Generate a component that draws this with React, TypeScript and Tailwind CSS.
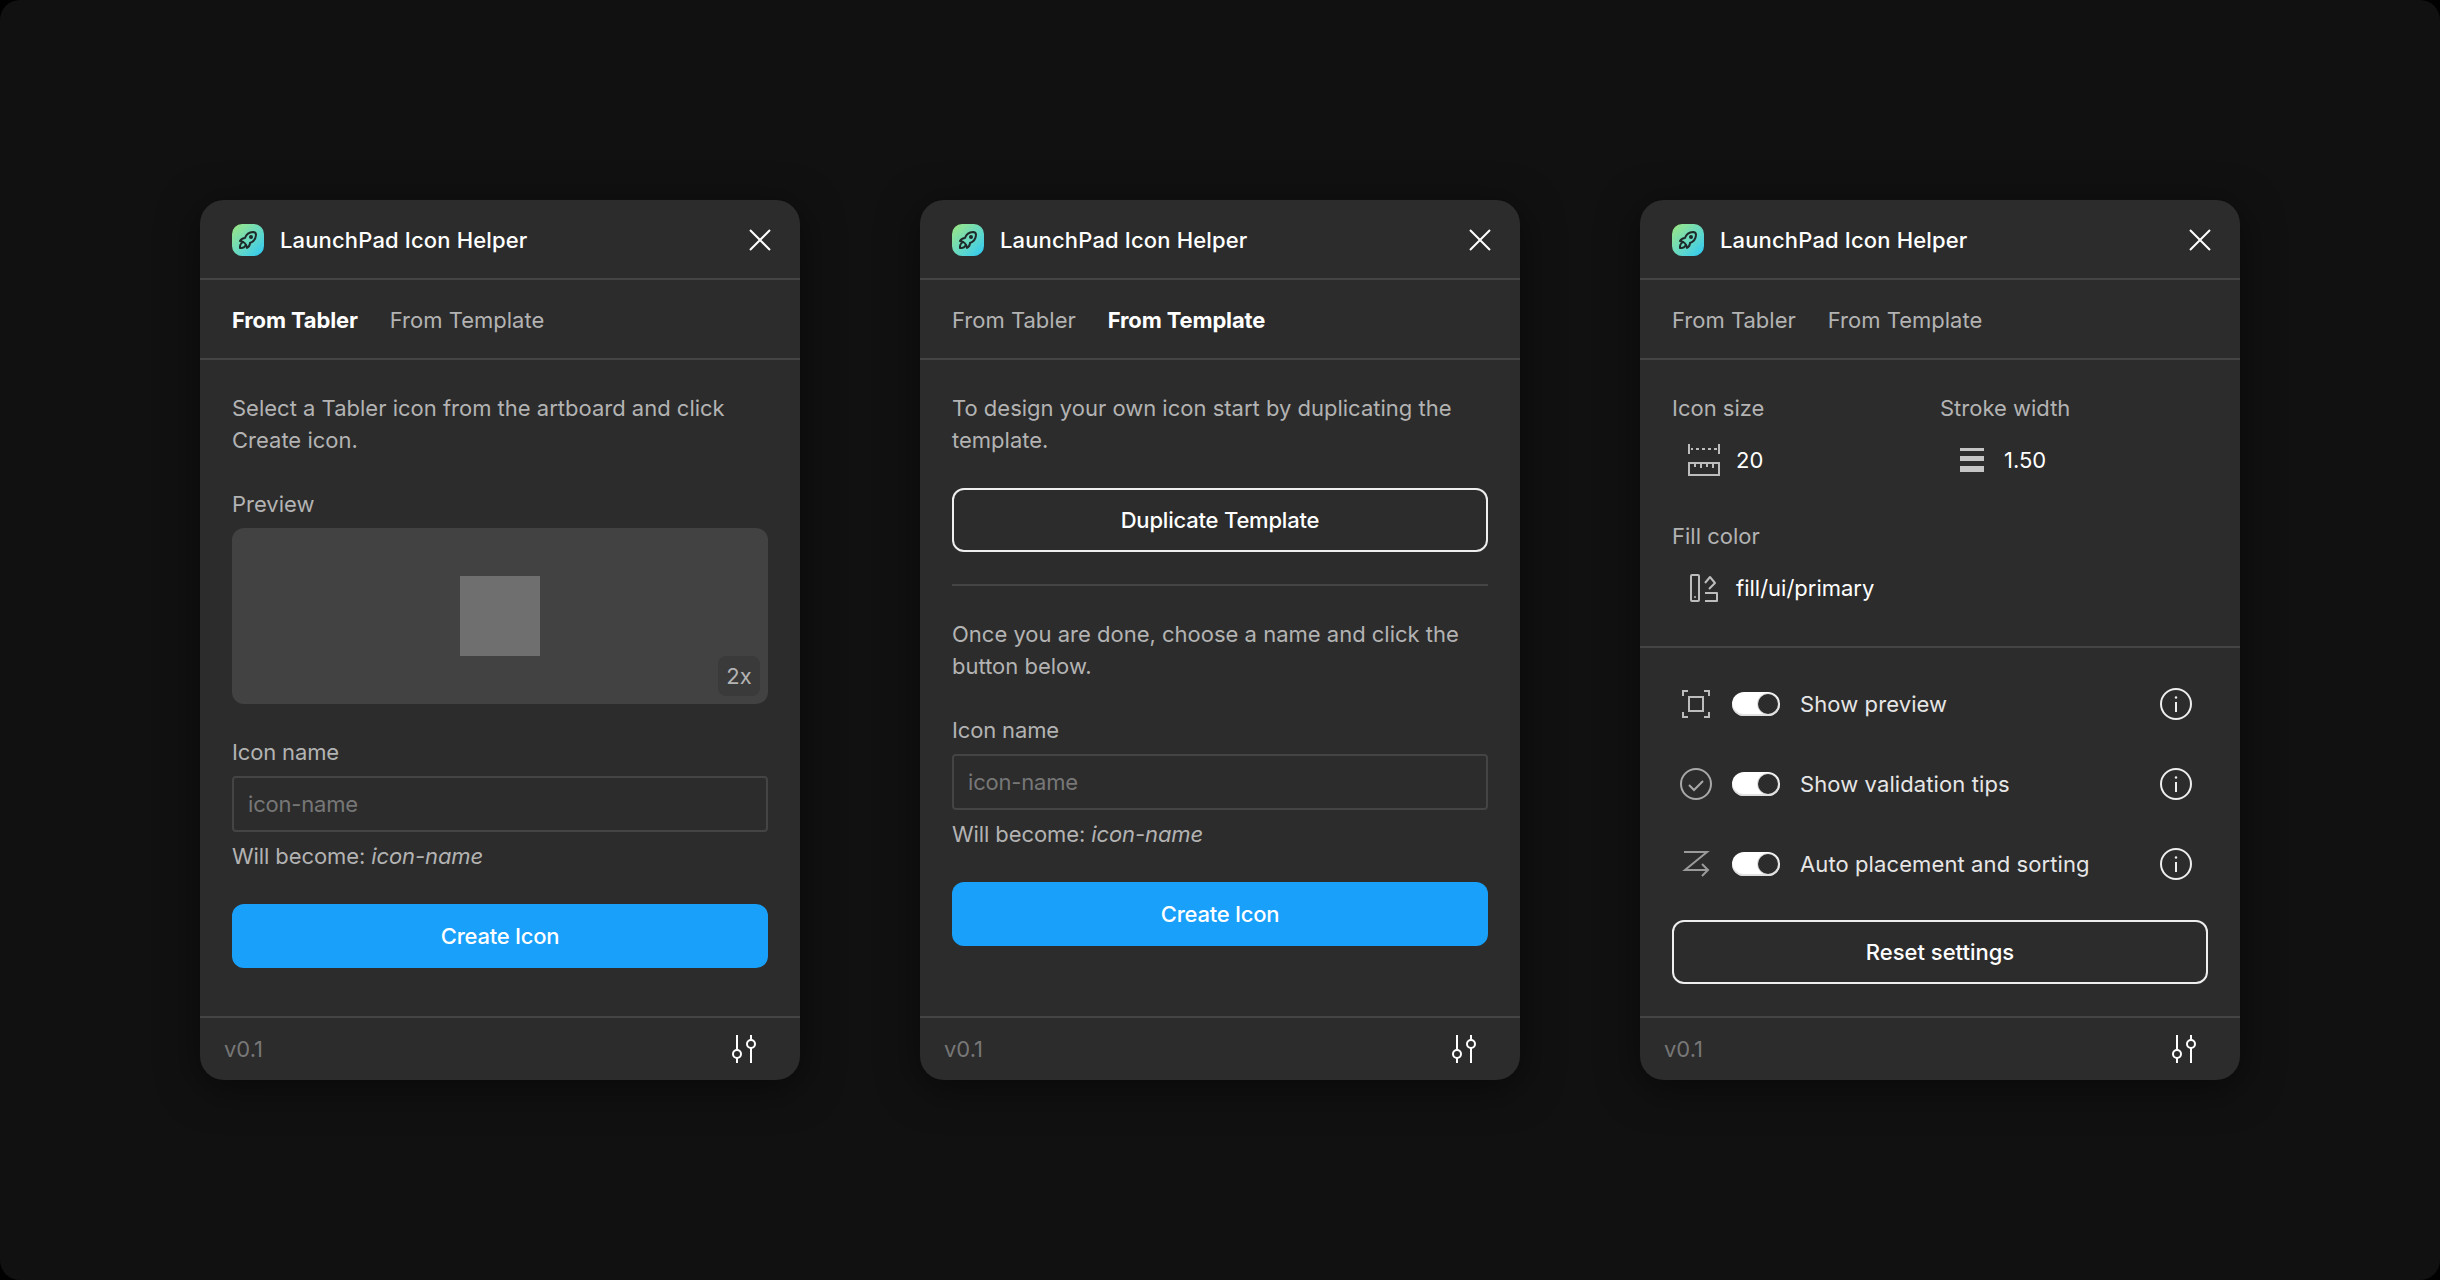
const font = "font-['Inter',sans-serif]";

function Logo() {
  return (
    <div className="flex h-8 w-8 items-center justify-center rounded-[10px] bg-gradient-to-br from-[#9be77a] to-[#22c8f5]">
      <svg viewBox="0 0 24 24" className="h-6 w-6" fill="none" stroke="#1f2a2a" strokeWidth="2" strokeLinecap="round" strokeLinejoin="round">
        <path d="M4 13a8 8 0 0 1 7 7a6 6 0 0 0 3 -5a9 9 0 0 0 6 -8a3 3 0 0 0 -3 -3a9 9 0 0 0 -8 6a6 6 0 0 0 -5 3" />
        <path d="M7 14a6 6 0 0 0 -3 6a6 6 0 0 0 6 -3" />
        <circle cx="15" cy="9" r="1" />
      </svg>
    </div>
  );
}

function CloseIcon() {
  return (
    <svg width="22" height="22" viewBox="0 0 22 22" fill="none" stroke="#fff" strokeWidth="2">
      <path d="M1 1l20 20M21 1L1 21" />
    </svg>
  );
}

function SlidersIcon() {
  return (
    <svg width="28" height="28" viewBox="0 0 28 28" fill="none" stroke="#fff" strokeWidth="2">
      <path d="M7 0v15M7 23v5M21 0v5M21 13v15" />
      <circle cx="7" cy="19" r="4" />
      <circle cx="21" cy="9" r="4" />
    </svg>
  );
}

function Tabs({ active }: { active?: number }) {
  return (
    <div className="flex h-20 items-center gap-8 border-b-2 border-[#444] px-8 pt-[2px] text-[22px] leading-8 text-[#b3b3b3]">
      <span className={active === 0 ? "font-bold tracking-[-0.15px] text-white" : ""}>From Tabler</span>
      <span className={active === 1 ? "font-bold tracking-[-0.15px] text-white" : ""}>From Template</span>
    </div>
  );
}

function PluginCard({ active, children }: { active?: number; children: React.ReactNode }) {
  return (
    <div className="flex h-[880px] w-[600px] flex-col overflow-hidden rounded-3xl bg-[#2c2c2c] shadow-[0_8px_40px_rgba(0,0,0,0.5)]">
      <div className="flex h-20 shrink-0 items-center justify-between border-b-2 border-[#444] pt-[2px] pl-8 pr-[29px]">
        <div className="flex items-center gap-4">
          <Logo />
          <span className="text-[22px] leading-8 font-medium tracking-[0.15px] text-white">LaunchPad Icon Helper</span>
        </div>
        <CloseIcon />
      </div>
      <Tabs active={active} />
      <div className="flex-1 px-8 text-[22px] leading-8">{children}</div>
      <div className="flex h-[64px] shrink-0 items-center justify-between border-t-2 border-[#444] pl-6 pr-[42px]">
        <span className="text-[22px] text-[#777]">v0.1</span>
        <SlidersIcon />
      </div>
    </div>
  );
}

function NameField() {
  return (
    <>
      <div className="tracking-[-0.15px] text-[#b3b3b3]">Icon name</div>
      <div className="mt-2 flex h-14 items-center rounded border-2 border-[#444] px-3.5 tracking-[-0.2px] text-[#777]">icon-name</div>
      <div className="mt-2 tracking-[-0.1px] text-[#b3b3b3]">
        Will become: <em>icon-name</em>
      </div>
      <button className="mt-8 block h-16 w-full rounded-xl bg-[#18a0fb] font-medium tracking-[-0.25px] text-white">Create Icon</button>
    </>
  );
}

function OutlineButton({ label, tight }: { label: string; tight?: boolean }) {
  return (
    <button className={`block h-16 w-full rounded-xl border-2 border-[#eee] font-medium text-white ${tight ? "tracking-[-0.2px]" : ""}`}>
      {label}
    </button>
  );
}

function RulerIcon() {
  return (
    <svg width="32" height="32" viewBox="0 0 32 32" fill="none" stroke="#bdbdbd" strokeWidth="2">
      <path d="M1 0v10M31 0v10M3 5h2M8 5h3M14 5h3M20 5h3M26 5h3" />
      <path d="M1 19h30v12H1zM7 19v4M13 19v5M19 19v4M25 19v5" />
    </svg>
  );
}

function StrokeIcon() {
  return (
    <svg width="24" height="24" viewBox="0 0 24 24" fill="#c4c4c4">
      <rect y="0" width="24" height="3" />
      <rect y="8" width="24" height="5" />
      <rect y="18" width="24" height="6" />
    </svg>
  );
}

function FillIcon() {
  return (
    <svg width="28" height="28" viewBox="0 0 28 28" fill="none" stroke="#bdbdbd" strokeWidth="2" strokeLinejoin="round">
      <rect x="1" y="1" width="8" height="26" rx="1" />
      <circle cx="5" cy="23" r="1" fill="#bdbdbd" stroke="none" />
      <path d="M15 9l5 -6l5 6l-6 6" />
      <path d="M15 19h12v8H15" />
    </svg>
  );
}

function PreviewIcon() {
  return (
    <svg width="28" height="28" viewBox="0 0 28 28" fill="none" stroke="#bdbdbd" strokeWidth="2">
      <path d="M1 6V1h5M22 1h5v5M27 22v5h-5M6 27H1v-5" />
      <rect x="7" y="7" width="14" height="14" />
    </svg>
  );
}

function CheckIcon() {
  return (
    <svg width="32" height="32" viewBox="0 0 32 32" fill="none" stroke="#a8a8a8" strokeWidth="2">
      <circle cx="16" cy="16" r="15" />
      <path d="M9 17l5 5l9 -9" />
    </svg>
  );
}

function SortIcon() {
  return (
    <svg width="28" height="28" viewBox="0 0 28 28" fill="none" stroke="#9a9a9a" strokeWidth="2">
      <path d="M2 2h23L3 20h23M20 14l6 6l-6 6" />
    </svg>
  );
}

function InfoIcon() {
  return (
    <svg width="32" height="32" viewBox="0 0 32 32" fill="none" stroke="#eee" strokeWidth="2">
      <circle cx="16" cy="16" r="15" />
      <path d="M16 14v10" />
      <circle cx="16" cy="9.5" r="1.2" fill="#eee" stroke="none" />
    </svg>
  );
}

function Toggle() {
  return (
    <div className="flex h-6 w-12 items-center justify-end rounded-full bg-white pr-[2px] shadow-[inset_0_-2px_0_#e0e0e0]">
      <div className="h-5 w-5 rounded-full bg-[#2c2c2c] shadow-[0_0_0_1px_#e0e0e0]" />
    </div>
  );
}

function SettingRow({ icon, label }: { icon: React.ReactNode; label: string }) {
  return (
    <div className="flex h-20 items-center pr-4">
      <div className="flex w-12 justify-center">{icon}</div>
      <div className="ml-3">
        <Toggle />
      </div>
      <span className="ml-5 flex-1 tracking-[0.1px] text-[#e6e6e6]">{label}</span>
      <InfoIcon />
    </div>
  );
}

function ValueRow({ icon, value }: { icon: React.ReactNode; value: string }) {
  return (
    <div className="mt-3 flex h-12 items-center gap-4 pl-4 text-white">
      <div className="flex h-8 w-8 items-center justify-center">{icon}</div>
      <span>{value}</span>
    </div>
  );
}

export default function App() {
  return (
    <div className="h-[1280px] w-[2440px] bg-black">
      <div className={`flex h-full w-full items-center justify-center gap-[120px] rounded-[20px] bg-[#111] ${font}`}>
        {/* From Tabler */}
        <PluginCard active={0}>
          <p className="mt-8 text-[#b3b3b3]">
            Select a Tabler icon from the artboard and click
            <br />
            Create icon.
          </p>
          <div className="mt-8 text-[#b3b3b3]">Preview</div>
          <div className="relative mt-2 mb-8 flex h-[176px] items-center justify-center rounded-xl bg-[#424242]">
            <div className="h-20 w-20 bg-[#6f6f6f]" />
            <div className="absolute right-2 bottom-2 flex h-10 w-[42px] items-center justify-center rounded-lg bg-[#3a3a3a] text-[#b3b3b3]">
              2x
            </div>
          </div>
          <NameField />
        </PluginCard>

        {/* From Template */}
        <PluginCard active={1}>
          <p className="mt-8 text-[#b3b3b3]">
            To design your own icon start by duplicating the
            <br />
            template.
          </p>
          <div className="mt-8">
            <OutlineButton label="Duplicate Template" tight />
          </div>
          <div className="mt-8 mb-8 h-0.5 bg-[#444]" />
          <p className="mb-8 text-[#b3b3b3]">
            Once you are done, choose a name and click the
            <br />
            button below.
          </p>
          <NameField />
        </PluginCard>

        {/* Settings */}
        <PluginCard>
          <div className="-mx-8 border-b-2 border-[#444] px-8 pt-8 pb-[34px]">
            <div className="grid grid-cols-2">
              <div>
                <div className="text-[#b3b3b3]">Icon size</div>
                <ValueRow icon={<RulerIcon />} value="20" />
              </div>
              <div>
                <div className="text-[#b3b3b3]">Stroke width</div>
                <ValueRow icon={<StrokeIcon />} value="1.50" />
              </div>
            </div>
            <div className="mt-9 text-[#b3b3b3]">Fill color</div>
            <ValueRow icon={<FillIcon />} value="fill/ui/primary" />
          </div>
          <div className="pt-4">
            <SettingRow icon={<PreviewIcon />} label="Show preview" />
            <SettingRow icon={<CheckIcon />} label="Show validation tips" />
            <SettingRow icon={<SortIcon />} label="Auto placement and sorting" />
            <div className="mt-4">
              <OutlineButton label="Reset settings" />
            </div>
          </div>
        </PluginCard>
      </div>
    </div>
  );
}
